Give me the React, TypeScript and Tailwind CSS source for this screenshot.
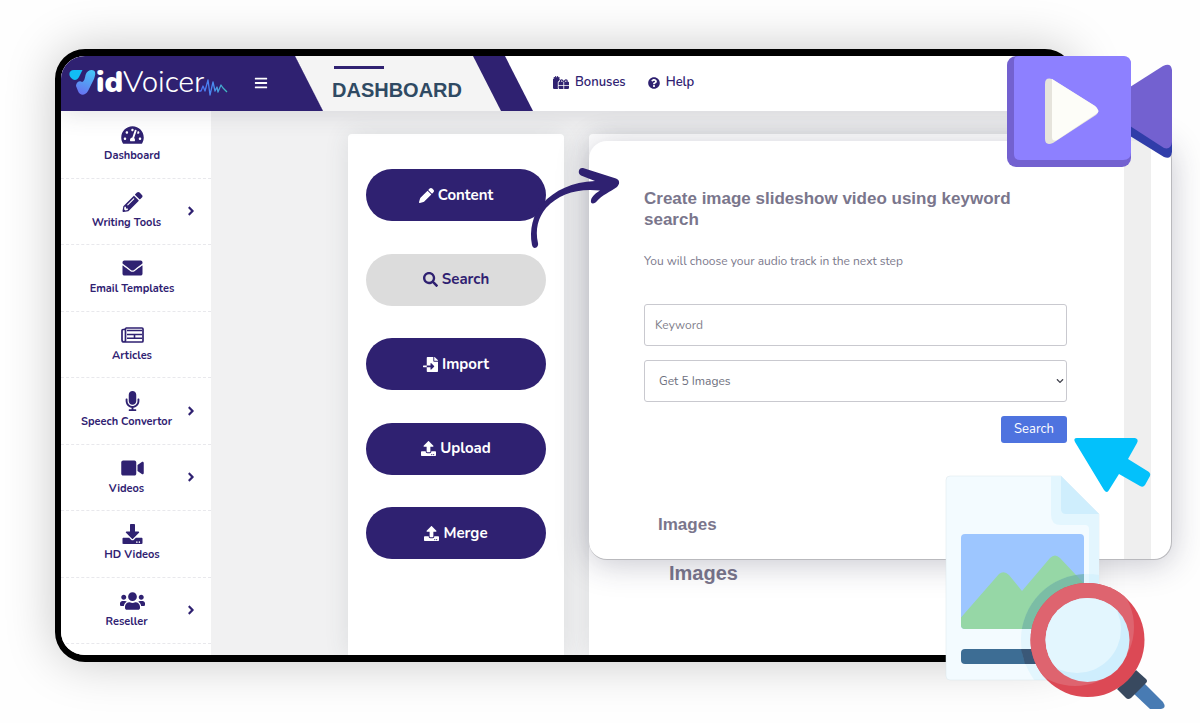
import { useState } from 'react';
import type { ReactNode } from 'react';
import {
  FaAngleRight,
  FaBars,
  FaChevronDown,
  FaDownload,
  FaEnvelope,
  FaFileImport,
  FaGifts,
  FaMicrophone,
  FaPencilAlt,
  FaQuestionCircle,
  FaSearch,
  FaTachometerAlt,
  FaUpload,
  FaUsers,
  FaVideo,
} from 'react-icons/fa';
import { FaPen } from 'react-icons/fa6';

interface IconProps {
  className?: string;
}

type IconComponent = (props: IconProps) => ReactNode;

interface NavItem {
  label: string;
  icon: IconComponent;
  expandable?: boolean;
}

function NewspaperIcon({ className }: IconProps) {
  return (
    <svg className={className} viewBox="0 0 23 20" fill="none" stroke="currentColor">
      <path
        d="M4.500 3H21Q22 3 22 4V16Q22 17 21 17H3Q1 17 1 15V5.500Q1 4.500 2 4.500H4.500M4.500 3V15Q4.500 17 3 17"
        strokeWidth="1.700"
      />
      <path d="M6 5.500H21M6 9.500H21M6 13.300H21M13.500 9.500V14" strokeWidth="1.600" />
    </svg>
  );
}

const NAV_ITEMS: NavItem[] = [
  { label: 'Dashboard', icon: FaTachometerAlt },
  { label: 'Writing Tools', icon: FaPencilAlt, expandable: true },
  { label: 'Email Templates', icon: FaEnvelope },
  { label: 'Articles', icon: NewspaperIcon },
  { label: 'Speech Convertor', icon: FaMicrophone, expandable: true },
  { label: 'Videos', icon: FaVideo, expandable: true },
  { label: 'HD Videos', icon: FaDownload },
  { label: 'Reseller', icon: FaUsers, expandable: true },
];

const ACTIONS: { label: string; icon: IconComponent }[] = [
  { label: 'Content', icon: FaPen },
  { label: 'Search', icon: FaSearch },
  { label: 'Import', icon: FaFileImport },
  { label: 'Upload', icon: FaUpload },
  { label: 'Merge', icon: FaUpload },
];

function Logo() {
  return (
    <a href="#" className="flex items-center text-white" aria-label="VidVoicer">
      <svg className="h-7 w-[27px] shrink-0" viewBox="0 0 27 28" fill="none">
        <defs>
          <linearGradient id="mark" x1="22" y1="2" x2="12" y2="27" gradientUnits="userSpaceOnUse">
            <stop stopColor="#45c4f7" />
            <stop offset="1" stopColor="#6a6cf0" />
          </linearGradient>
        </defs>
        <path
          d="M16.500 6C18 1 23 0 25.500 2C27 4 26 7 25 10L19 22C16 27 11 27 9 22L7 17C7 13 11 11 13 13C15 13 16 9 16.500 6Z"
          fill="url(#mark)"
        />
        <path d="M5 1H13.500L10 8C8.500 11 6 11.500 4 10.500C-1 8-1 1 5 1Z" fill="#12bdf5" />
      </svg>
      <span className="text-[30px] leading-8">
        <span className="font-black">id</span>
        <span className="font-light">Voicer</span>
      </span>
      <svg className="-ml-1.5 mt-2 h-5 w-[30px] shrink-0" viewBox="0 0 30 20" fill="none">
        <defs>
          <linearGradient id="wave" x1="0" y1="0" x2="30" y2="0" gradientUnits="userSpaceOnUse">
            <stop stopColor="#4c6ef0" />
            <stop offset="0.500" stopColor="#4a8af0" />
            <stop offset="1" stopColor="#3fc2b8" />
          </linearGradient>
        </defs>
        <path
          d="M1 14H3L5 9L7 14L10 3L12 18L15 5L17 14L19 10L20 15L23 8L25 11L29 15"
          stroke="url(#wave)"
          strokeWidth="1.300"
          strokeLinejoin="round"
        />
      </svg>
    </a>
  );
}

function Header() {
  return (
    <header className="relative z-10 flex h-[55px] bg-white shadow-[0_2px_24px_rgba(60,60,80,0.16)]">
      <div className="flex w-[262px] shrink-0 items-center justify-between bg-[#2f2171] pr-[55px] pb-0.5 pl-2 [clip-path:polygon(0_0,234px_0,100%_100%,0_100%)]">
        <Logo />
        <button type="button" aria-label="Toggle menu" className="text-white">
          <FaBars className="size-[14px]" />
        </button>
      </div>
      <div className="-ml-7 w-[238px] shrink-0 bg-[#2f2171] [clip-path:polygon(0_0,210px_0,100%_100%,28px_100%)]">
        <div className="h-full w-[206px] bg-[#f4f4f4] pt-[10px] pl-[37px] [clip-path:polygon(0_0,178px_0,100%_100%,28px_100%)]">
          <div className="ml-0.5 h-[3px] w-[50px] bg-[#2f2171]" />
          <h1 className="mt-[7px] font-['Liberation_Sans'] text-xl leading-7 font-bold text-[#2f4a63]">
            DASHBOARD
          </h1>
        </div>
      </div>
      <nav className="flex items-center gap-[22px] pb-0.5 pl-5 text-[13px] font-semibold text-[#2f2171]">
        <a href="#" className="flex items-center gap-1.5">
          <FaGifts className="h-[13px] w-4" />
          Bonuses
        </a>
        <a href="#" className="flex items-center gap-1.5">
          <FaQuestionCircle className="size-3" />
          Help
        </a>
      </nav>
    </header>
  );
}

function Sidebar() {
  return (
    <nav className="w-[150px] shrink-0 bg-white pt-px pb-[11px]">
      <ul className="grid h-[532px] grid-rows-8">
        {NAV_ITEMS.map(({ label, icon: Icon, expandable }) => (
          <li key={label} className="border-b border-dashed border-[#e8e8ec]">
            <a
              href="#"
              className={`flex h-full items-center pl-2 text-[11px] leading-4 font-bold text-[#2f2171] ${
                expandable ? 'pr-[13px]' : 'pr-4'
              }`}
            >
              <span className="flex flex-1 flex-col items-center gap-[3px]">
                <Icon className={expandable ? 'ml-3 h-5 w-[25px]' : 'h-5 w-[25px]'} />
                {label}
              </span>
              {expandable && <FaAngleRight className="size-3.5" />}
            </a>
          </li>
        ))}
      </ul>
    </nav>
  );
}

interface ActionPanelProps {
  active: string;
  onSelect: (label: string) => void;
}

function ActionPanel({ active, onSelect }: ActionPanelProps) {
  return (
    <section className="w-[216px] shrink-0 rounded-t bg-white px-[18px] pt-[35px] shadow-[0_0_24px_rgba(60,70,80,0.12)]">
      <div className="flex h-[390px] flex-col justify-between">
        {ACTIONS.map(({ label, icon: Icon }) => (
          <button
            key={label}
            type="button"
            onClick={() => onSelect(label)}
            className={`flex h-[52px] items-center justify-center gap-1 rounded-full text-[15px] font-bold ${
              active === label ? 'bg-[#dcdcdc] text-[#2f2171]' : 'bg-[#2f2171] text-white'
            }`}
          >
            <Icon className="size-[15px]" />
            {label}
          </button>
        ))}
      </div>
    </section>
  );
}

function SearchCard() {
  const [keyword, setKeyword] = useState('');

  return (
    <section className="absolute top-[141px] right-7 left-[589px] flex h-[419px] overflow-hidden rounded-[18px] border-r border-b border-[#b9b9bd] bg-white shadow-[0_4px_32px_rgba(40,40,70,0.26)]">
      <form className="flex-1 pt-[47px] pr-[57px] pl-[55px]" onSubmit={(e) => e.preventDefault()}>
        <h2 className="font-['Liberation_Sans'] text-[17px] leading-[21px] font-bold text-[#7a768c]">
          Create image slideshow video using keyword search
        </h2>
        <p className="mt-[23px] text-xs leading-4 text-[#7b798c]">
          You will choose your audio track in the next step
        </p>
        <input
          type="text"
          aria-label="Keyword"
          placeholder="Keyword"
          value={keyword}
          onChange={(e) => setKeyword(e.target.value)}
          className="mt-[35px] block h-[42px] w-full rounded-[3px] border border-[#c9c9cf] px-2.5 text-xs text-[#6e707e] placeholder-[#7f808c]"
        />
        <div className="relative mt-3.5">
          <select
            aria-label="Number of images"
            className="block h-[42px] w-full appearance-none rounded-[3px] border border-[#c9c9cf] bg-white px-3.5 text-xs text-[#6e707e]"
          >
            <option>Get 5 Images</option>
            <option>Get 10 Images</option>
            <option>Get 15 Images</option>
          </select>
          <FaChevronDown className="pointer-events-none absolute top-[17px] right-[3px] size-2 text-[#44454f]" />
        </div>
        <button
          type="submit"
          className="mt-3.5 ml-auto block h-[27px] w-[66px] rounded-[3px] bg-[#4e73df] text-[13px] text-white"
        >
          Search
        </button>
        <h3 className="mt-[71px] ml-3.5 font-['Liberation_Sans'] text-[17px] leading-[21px] font-bold text-[#7a768c]">
          Images
        </h3>
      </form>
      <div className="w-[27px] bg-[#efefef]" />
      <div className="w-5" />
    </section>
  );
}

function CurvedArrow() {
  return (
    <svg
      className="pointer-events-none absolute top-[160px] left-[525px] h-[95px] w-[100px]"
      viewBox="525 160 100 95"
      fill="#2f2171"
    >
      <path d="M532 245C529 230 533 214 542 204C555 190 572 182 595 181L581 175.500C577 173 579 167 583 168L616 178.500C620 180 620 184 617 187C610 192 602 195 597 201C595 204 590 205 591 200C592 196 596 193 600 190.500C577 188 559 194 546 208C538 218 535 229 538 243C539 248 533 250 532 245Z" />
    </svg>
  );
}

function CameraArt() {
  return (
    <svg
      className="pointer-events-none absolute top-[54px] right-[27px] h-[114px] w-[167px]"
      viewBox="1006 54 167 114"
    >
      <path d="M1130 120L1172 140V152Q1171 160 1164 157L1130 136Z" fill="#303da9" />
      <path d="M1130 87L1163 66Q1171 62 1172 70V142Q1171 150 1164 148L1130 126Z" fill="#7361d0" />
      <rect x="1007" y="56" width="124" height="111" rx="9" fill="#7361d0" />
      <path d="M1019 56H1123Q1131 56 1131 64V152Q1131 160 1123 160H1020Q1014 160 1014 154V61Q1014 56 1019 56Z" fill="#8d80ff" />
      <path
        d="M1045 84Q1045 77 1052 79L1095 106Q1101 111 1096 115L1053 143Q1045 146 1045 139Z"
        fill="#e6e4dc"
      />
      <path
        d="M1052 79L1095 106Q1101 111 1096 114L1057 140Q1052 142 1052 137Z"
        fill="#fdfdf8"
      />
    </svg>
  );
}

function CursorArt() {
  return (
    <svg
      className="pointer-events-none absolute top-[435px] right-[47px] h-[60px] w-[80px]"
      viewBox="1073 435 80 60"
    >
      <path
        d="M1077 438H1135Q1139 439 1137 443L1128 459L1149 472Q1151 474 1150 476L1145 485Q1143 488 1140 486L1119 474L1109 490Q1107 494 1104 490L1075 442Q1073 438 1077 438Z"
        fill="#03c1fb"
      />
    </svg>
  );
}

function DocumentArt() {
  return (
    <svg
      className="pointer-events-none absolute top-[474px] right-[33px] h-[236px] w-[223px]"
      viewBox="944 474 223 236"
    >
      <defs>
        <clipPath id="photo">
          <rect x="961" y="534" width="123" height="95" rx="4" />
        </clipPath>
        <clipPath id="sheet">
          <path d="M946 476H1061L1099 514V680H946Z" />
        </clipPath>
        <clipPath id="ring">
          <circle cx="1087.500" cy="640" r="57" />
        </clipPath>
        <clipPath id="lens">
          <circle cx="1087.500" cy="640" r="42" />
        </clipPath>
      </defs>
      <path
        d="M950 476H1061L1099 514V680H950Q946 680 946 676V480Q946 476 950 476Z"
        fill="#f3fbff"
        stroke="#dbe5e9"
        strokeWidth="0.500"
      />
      <path
        d="M1051 476H1061L1099 514V600H1089V529Q1089 525 1085 525H1061Q1051 525 1051 515Z"
        fill="#e3f6fe"
      />
      <path d="M1061 476L1099 514H1066Q1061 514 1061 509Z" fill="#cfeefd" />
      <g clipPath="url(#photo)">
        <rect x="961" y="534" width="123" height="95" fill="#9dc6ff" />
        <path
          d="M958 621L999 574Q1004 570 1009 575L1022 591L1050 558Q1055 553 1060 558L1090 590V632H958Z"
          fill="#96d7a6"
        />
      </g>
      <rect x="961" y="649" width="90" height="15" rx="4" fill="#3d6d94" />
      <circle cx="1087" cy="640" r="66" fill="#b5e6fb" opacity="0.250" clipPath="url(#sheet)" />
      <g clipPath="url(#photo)">
        <circle cx="1087" cy="640" r="66" fill="#5fa494" opacity="0.550" />
      </g>
      <path d="M1021 649H1051V664H1025Z" fill="#3a5878" />
      <path d="M1132 692L1144 683L1163 702Q1167 708 1161 709H1150Z" fill="#487bb3" />
      <path d="M1117 689L1136 670L1146 679Q1148 681 1146 683L1131 698Q1128 700 1126 698Z" fill="#38495f" />
      <circle cx="1087.500" cy="640" r="57" fill="#dc4955" />
      <circle cx="1075" cy="627" r="59" fill="#de646f" clipPath="url(#ring)" />
      <circle cx="1087.500" cy="640" r="42" fill="#cfeefd" />
      <circle cx="1077" cy="629" r="44" fill="#e3f6fe" clipPath="url(#lens)" />
    </svg>
  );
}

export default function App() {
  const [active, setActive] = useState('Search');

  return (
    <main className="relative min-h-screen overflow-hidden bg-[#fefefe] pt-[49px] pr-[125px] pb-[61px] pl-[55px] font-['Nunito','Open_Sans',sans-serif]">
      <div className="isolate overflow-hidden rounded-[30px] border-x-6 border-y-7 border-black bg-[#f3f3f3] shadow-[0_0_50px_rgba(0,0,0,0.22)]">
        <Header />
        <div className="flex">
          <Sidebar />
          <div className="flex flex-1 gap-[25px] bg-[#f1f1f2] pt-[23px] pl-[137px]">
            <ActionPanel active={active} onSelect={setActive} />
            <section className="flex-1 rounded-tl bg-white pt-[427px] pl-20 shadow-[0_0_24px_rgba(60,70,80,0.12)]">
              <h2 className="font-['Liberation_Sans'] text-xl leading-6 font-bold text-[#7a768c]">
                Images
              </h2>
            </section>
          </div>
        </div>
      </div>
      <SearchCard />
      <CurvedArrow />
      <CameraArt />
      <CursorArt />
      <DocumentArt />
    </main>
  );
}
